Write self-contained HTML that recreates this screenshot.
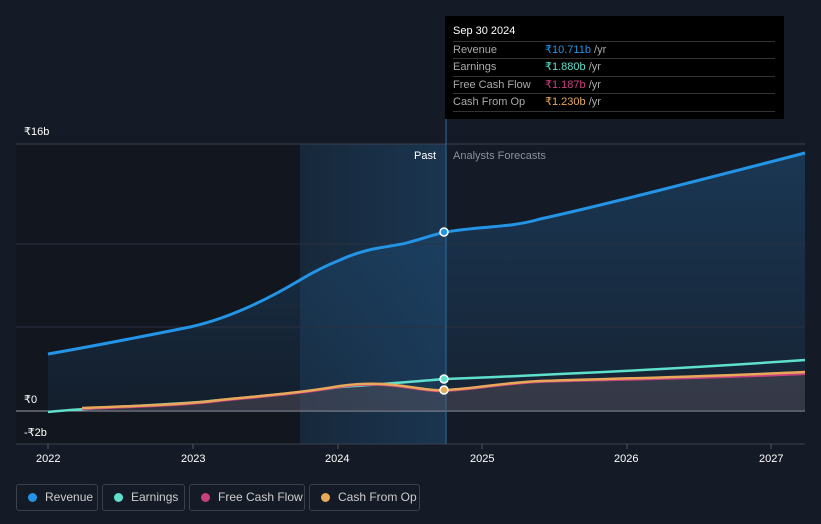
<!DOCTYPE html>
<html><head><meta charset="utf-8"><style>
body{margin:0;width:821px;height:524px;background:#151b26;font-family:"Liberation Sans",sans-serif;overflow:hidden;position:relative}
.lbl{position:absolute;color:#fff;font-size:12px}
.tt{position:absolute;left:445px;top:16px;width:339px;height:103px;background:#000;}
.tt .h{position:absolute;left:8px;top:9px;color:#fff;font-size:11px}
.tt .r{position:absolute;left:8px;width:322px;height:17px;border-top:1px solid #333;font-size:11px;color:#aaa;line-height:17px}
.tt .r span{position:absolute;left:92px}
.tt .r i{font-style:normal;color:#aaa}
.leg{position:absolute;top:484px;height:27px;border:1px solid #3a404c;border-radius:3px;color:#ccc;font-size:12px;line-height:25px;box-sizing:border-box;padding-left:28px}
.leg b{position:absolute;left:11px;top:8px;width:9px;height:9px;border-radius:50%}
</style></head><body>
<svg width="821" height="524" style="position:absolute;left:0;top:0">
<defs>
<linearGradient id="hl" x1="0" x2="1"><stop offset="0" stop-color="#17283a"/><stop offset="1" stop-color="#1a3550"/></linearGradient>
<linearGradient id="rf" x1="0" y1="0" x2="0" y2="1"><stop offset="0" stop-color="#1d4a72" stop-opacity=".75"/><stop offset="1" stop-color="#1d4a72" stop-opacity=".2"/></linearGradient>
</defs>
<rect x="16" y="144" width="284" height="300" fill="#12161e"/>
<rect x="300" y="144" width="146" height="300" fill="url(#hl)"/>
<path d="M48,354 C100,345 160,333 190,327 C230,318 270,298 300,280 C320,268 335,262 340,260 C370,246 395,247 410,242 C425,238 435,234 446,232 C480,226 510,228 540,219 C600,206 700,180 805,153 L805,411 L48,411Z" fill="url(#rf)" opacity=".8"/>
<line x1="16" y1="144" x2="805" y2="144" stroke="#3a4150"/>
<line x1="16" y1="244" x2="805" y2="244" stroke="#2a3140"/>
<line x1="16" y1="327" x2="805" y2="327" stroke="#2a3140"/>
<line x1="16" y1="411" x2="805" y2="411" stroke="#9aa0aa"/>
<line x1="16" y1="444" x2="805" y2="444" stroke="#3a4150"/>
<line x1="446" y1="16" x2="446" y2="444" stroke="#2a6fa0"/>
<path d="M82,408 C140,406 190,404 220,400 C260,396 300,393 340,386 C370,382 390,384 410,387 C430,390 440,391 446,390 C480,388 500,383 540,381 C600,379 700,377 805,372 L805,411 L82,411Z" fill="#5a5560" opacity=".45"/>
<path d="M48,354 C100,345 160,333 190,327 C230,318 270,298 300,280 C320,268 335,262 340,260 C370,246 395,247 410,242 C425,238 435,234 446,232 C480,226 510,228 540,219 C600,206 700,180 805,153" fill="none" stroke="#2394e6" stroke-width="3"/>
<path d="M48,412 C100,407 160,405 200,402 C260,396 300,393 340,387 C400,383 430,380 446,379 C500,377 520,376 560,374 C650,370 720,366 805,360" fill="none" stroke="#5fe0cc" stroke-width="2.5"/>
<path d="M82,409 C140,407 190,405 220,401 C260,397 300,394 340,387 C370,383 390,385 410,388 C430,391 440,392 446,391 C480,389 500,384 540,382 C600,380 700,379 805,374" fill="none" stroke="#c9407f" stroke-width="2"/>
<path d="M82,408 C140,406 190,404 220,400 C260,396 300,393 340,386 C370,382 390,384 410,387 C430,390 440,391 446,390 C480,388 500,383 540,381 C600,379 700,377 805,372" fill="none" stroke="#e8a85a" stroke-width="2.5"/>
<circle cx="444" cy="232" r="4" fill="#2394e6" stroke="#fff" stroke-width="1.5"/>
<circle cx="444" cy="379" r="4" fill="#5fe0cc" stroke="#fff" stroke-width="1.5"/>
<circle cx="444" cy="390" r="4" fill="#e8a85a" stroke="#fff" stroke-width="1.5"/>
<g stroke="#555" ><line x1="48" y1="444" x2="48" y2="449"/><line x1="193" y1="444" x2="193" y2="449"/><line x1="338" y1="444" x2="338" y2="449"/><line x1="482" y1="444" x2="482" y2="449"/><line x1="627" y1="444" x2="627" y2="449"/><line x1="771" y1="444" x2="771" y2="449"/></g>
</svg>
<div class="lbl" style="left:24px;top:125px;font-size:11px">₹16b</div>
<div class="lbl" style="left:24px;top:393px;font-size:11px">₹0</div>
<div class="lbl" style="left:24px;top:426px;font-size:11px">-₹2b</div>
<div class="lbl" style="left:414px;top:150px;font-size:11px">Past</div>
<div class="lbl" style="left:453px;top:150px;font-size:11px;color:#8a909a">Analysts Forecasts</div>
<div class="lbl" style="left:36px;top:453px;font-size:11px">2022</div>
<div class="lbl" style="left:181px;top:453px;font-size:11px">2023</div>
<div class="lbl" style="left:325px;top:453px;font-size:11px">2024</div>
<div class="lbl" style="left:470px;top:453px;font-size:11px">2025</div>
<div class="lbl" style="left:614px;top:453px;font-size:11px">2026</div>
<div class="lbl" style="left:759px;top:453px;font-size:11px">2027</div>
<div class="tt"><div class="h">Sep 30 2024</div>
<div class="r" style="top:25px">Revenue<span><font color="#2394e6">₹10.711b</font> <i>/yr</i></span></div>
<div class="r" style="top:42px">Earnings<span><font color="#5fe0cc">₹1.880b</font> <i>/yr</i></span></div>
<div class="r" style="top:60px">Free Cash Flow<span><font color="#c9407f">₹1.187b</font> <i>/yr</i></span></div>
<div class="r" style="top:77px;border-bottom:1px solid #333">Cash From Op<span><font color="#e8a85a">₹1.230b</font> <i>/yr</i></span></div>
</div>
<div class="leg" style="left:16px;width:82px"><b style="background:#2394e6"></b>Revenue</div>
<div class="leg" style="left:102px;width:83px"><b style="background:#5fe0cc"></b>Earnings</div>
<div class="leg" style="left:189px;width:116px"><b style="background:#c9407f"></b>Free Cash Flow</div>
<div class="leg" style="left:309px;width:111px"><b style="background:#e8a85a"></b>Cash From Op</div>
</body></html>
